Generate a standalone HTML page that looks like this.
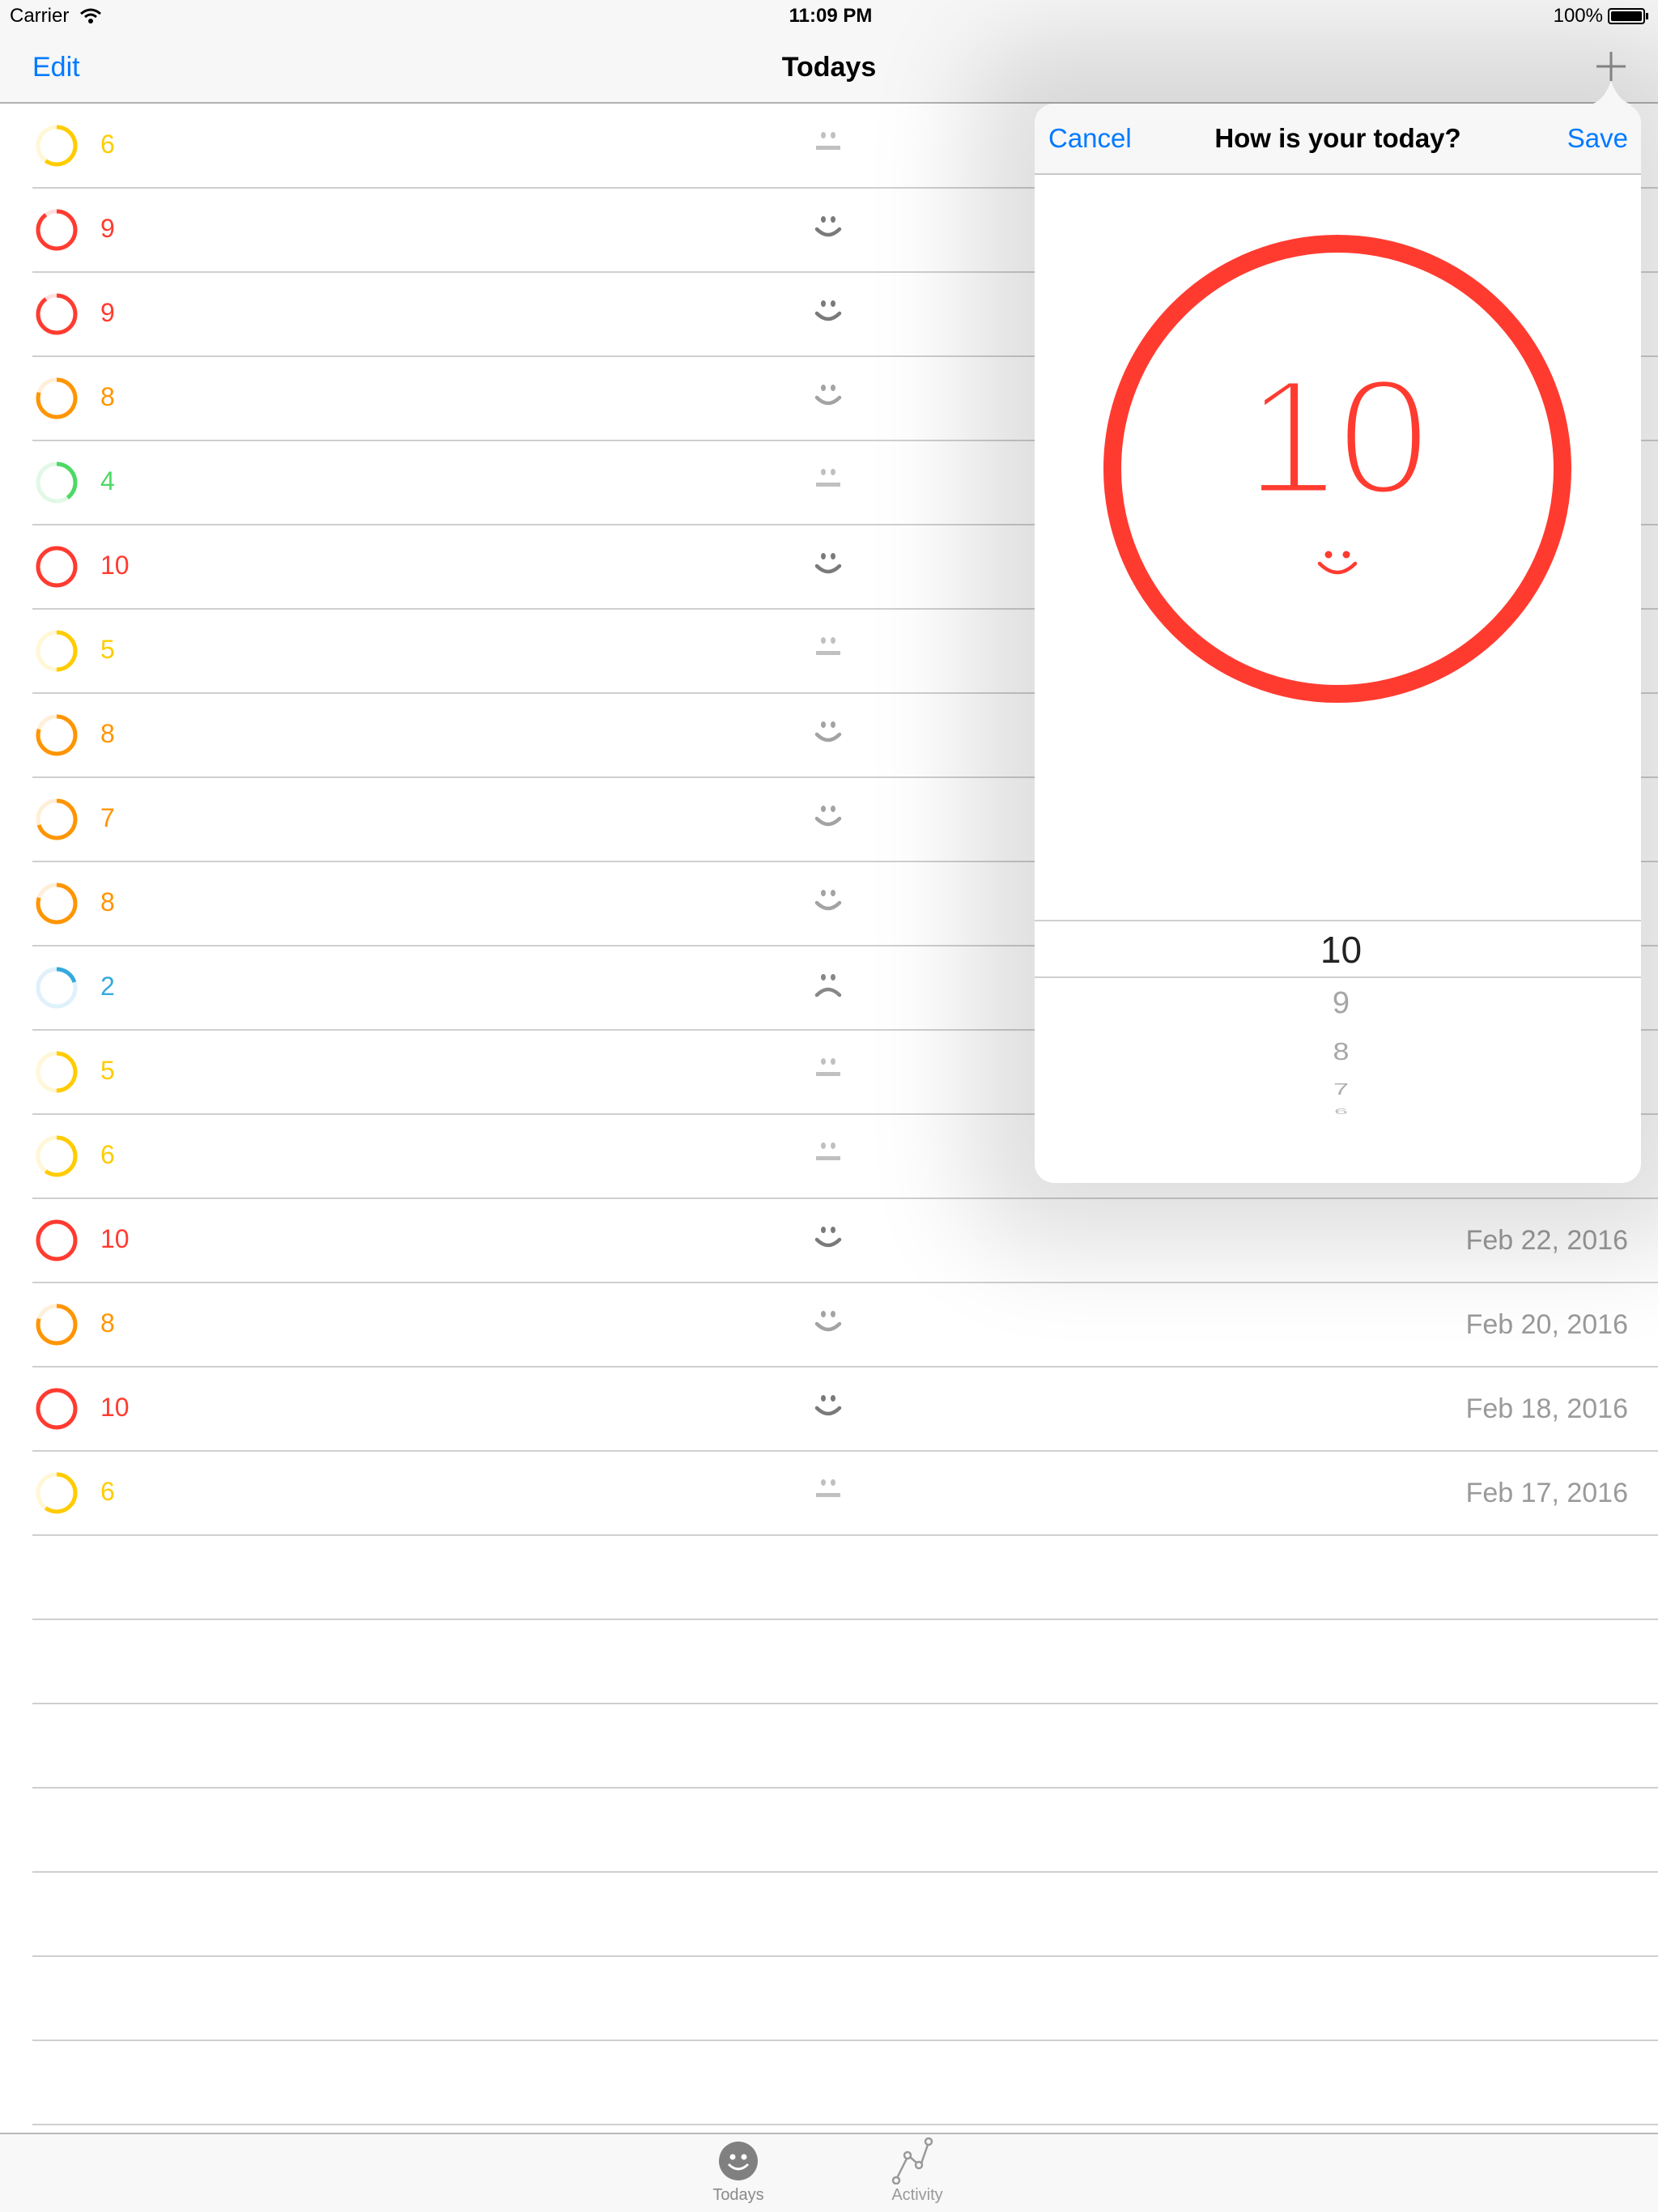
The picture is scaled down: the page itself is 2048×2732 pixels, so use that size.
<!DOCTYPE html>
<html><head><meta charset="utf-8"><style>
*{margin:0;padding:0;box-sizing:border-box}
body{width:2048px;height:2732px;position:relative;overflow:hidden;background:#fff;font-family:"Liberation Sans",sans-serif}
.abs{position:absolute}
.row{position:absolute;left:0;width:2048px;height:104px}
.sep{position:absolute;left:40px;right:0;top:103px;height:2px;background:#cfcfcf}
.num{position:absolute;left:124px;top:30px;font-size:32px;line-height:40px}
.ring{position:absolute;left:44px;top:26px}
.face{position:absolute;left:1004px;top:32px}
.date{position:absolute;right:37px;top:32px;font-size:34px;color:#9a9a9a;line-height:40px}
.r{color:#ff3b30}.o{color:#ff9500}.y{color:#ffcc00}.g{color:#4cd964}.b{color:#34aadc}
</style></head><body>

<svg width="0" height="0" style="position:absolute">
<defs>
<symbol id="sd" viewBox="0 0 38 36"><ellipse cx="13" cy="7" rx="3" ry="4" fill="#7a7a7a"/><ellipse cx="25" cy="7" rx="3" ry="4" fill="#7a7a7a"/><path d="M5 19 Q19 33 33 19" stroke="#7a7a7a" stroke-width="4.5" fill="none" stroke-linecap="round"/></symbol>
<symbol id="sl" viewBox="0 0 38 36"><ellipse cx="13" cy="7" rx="3" ry="4" fill="#a3a3a3"/><ellipse cx="25" cy="7" rx="3" ry="4" fill="#a3a3a3"/><path d="M5 19 Q19 33 33 19" stroke="#a3a3a3" stroke-width="4.5" fill="none" stroke-linecap="round"/></symbol>
<symbol id="nn" viewBox="0 0 38 36"><ellipse cx="13" cy="7" rx="3" ry="4" fill="#c0c0c0"/><ellipse cx="25" cy="7" rx="3" ry="4" fill="#c0c0c0"/><rect x="4" y="20" width="30" height="5" fill="#c0c0c0"/></symbol>
<symbol id="fr" viewBox="0 0 38 36"><ellipse cx="13" cy="7" rx="3" ry="4" fill="#888"/><ellipse cx="25" cy="7" rx="3" ry="4" fill="#888"/><path d="M5 29 Q19 15 33 29" stroke="#888" stroke-width="4.5" fill="none" stroke-linecap="round"/></symbol>
</defs></svg>

<!-- status + nav bar -->
<div class="abs" style="left:0;top:0;width:2048px;height:128px;background:#f7f7f7;border-bottom:2px solid #b2b2b2"></div>
<div class="abs" style="left:12px;top:6px;font-size:24px;color:#000">Carrier</div>
<svg class="abs" style="left:98px;top:8px" width="28" height="24" viewBox="0 0 28 24"><path d="M2 9 Q14 -1 26 9" stroke="#000" stroke-width="3" fill="none"/><path d="M7 13 Q14 7 21 13" stroke="#000" stroke-width="3" fill="none"/><circle cx="14" cy="18" r="3" fill="#000"/></svg>
<div class="abs" style="left:0;width:2052px;text-align:center;top:6px;font-size:24px;font-weight:bold;color:#000">11:09 PM</div>
<div class="abs" style="right:68px;top:6px;font-size:24px;color:#000">100%</div>
<div class="abs" style="left:1986px;top:10px;width:46px;height:20px;border:2px solid #000;border-radius:4px;padding:2px"><div style="width:100%;height:100%;background:#000;border-radius:2px"></div></div>
<div class="abs" style="left:2033px;top:16px;width:3px;height:8px;background:#000"></div>
<div class="abs" style="left:40px;top:64px;font-size:34px;color:#007aff">Edit</div>
<div class="abs" style="left:0;width:2048px;text-align:center;top:64px;font-size:34px;font-weight:bold;color:#000">Todays</div>
<svg class="abs" style="left:1970px;top:62px" width="40" height="40"><path d="M20 2V38M2 20H38" stroke="#8e8e8e" stroke-width="3"/></svg>

<!-- rows -->
<div class="row" style="top:128px"><div class="sep"></div><svg class="ring" width="52" height="52"><circle cx="26" cy="26" r="23" fill="none" stroke="#fff7d6" stroke-width="5"/><circle cx="26" cy="26" r="23" fill="none" stroke="#ffcc00" stroke-width="5" stroke-dasharray="86.7 200" transform="rotate(-90 26 26)"/></svg><div class="num y">6</div><svg class="face" width="38" height="36"><use href="#nn"/></svg></div>
<div class="row" style="top:232px"><div class="sep"></div><svg class="ring" width="52" height="52"><circle cx="26" cy="26" r="23" fill="none" stroke="#ffe0de" stroke-width="5"/><circle cx="26" cy="26" r="23" fill="none" stroke="#ff3b30" stroke-width="5" stroke-dasharray="130.1 200" transform="rotate(-90 26 26)"/></svg><div class="num r">9</div><svg class="face" width="38" height="36"><use href="#sd"/></svg></div>
<div class="row" style="top:336px"><div class="sep"></div><svg class="ring" width="52" height="52"><circle cx="26" cy="26" r="23" fill="none" stroke="#ffe0de" stroke-width="5"/><circle cx="26" cy="26" r="23" fill="none" stroke="#ff3b30" stroke-width="5" stroke-dasharray="130.1 200" transform="rotate(-90 26 26)"/></svg><div class="num r">9</div><svg class="face" width="38" height="36"><use href="#sd"/></svg></div>
<div class="row" style="top:440px"><div class="sep"></div><svg class="ring" width="52" height="52"><circle cx="26" cy="26" r="23" fill="none" stroke="#ffefd9" stroke-width="5"/><circle cx="26" cy="26" r="23" fill="none" stroke="#ff9500" stroke-width="5" stroke-dasharray="115.6 200" transform="rotate(-90 26 26)"/></svg><div class="num o">8</div><svg class="face" width="38" height="36"><use href="#sl"/></svg></div>
<div class="row" style="top:544px"><div class="sep"></div><svg class="ring" width="52" height="52"><circle cx="26" cy="26" r="23" fill="none" stroke="#e2f8e6" stroke-width="5"/><circle cx="26" cy="26" r="23" fill="none" stroke="#4cd964" stroke-width="5" stroke-dasharray="57.8 200" transform="rotate(-90 26 26)"/></svg><div class="num g">4</div><svg class="face" width="38" height="36"><use href="#nn"/></svg></div>
<div class="row" style="top:648px"><div class="sep"></div><svg class="ring" width="52" height="52"><circle cx="26" cy="26" r="23" fill="none" stroke="#ff3b30" stroke-width="5"/></svg><div class="num r">10</div><svg class="face" width="38" height="36"><use href="#sd"/></svg></div>
<div class="row" style="top:752px"><div class="sep"></div><svg class="ring" width="52" height="52"><circle cx="26" cy="26" r="23" fill="none" stroke="#fff7d6" stroke-width="5"/><circle cx="26" cy="26" r="23" fill="none" stroke="#ffcc00" stroke-width="5" stroke-dasharray="72.3 200" transform="rotate(-90 26 26)"/></svg><div class="num y">5</div><svg class="face" width="38" height="36"><use href="#nn"/></svg></div>
<div class="row" style="top:856px"><div class="sep"></div><svg class="ring" width="52" height="52"><circle cx="26" cy="26" r="23" fill="none" stroke="#ffefd9" stroke-width="5"/><circle cx="26" cy="26" r="23" fill="none" stroke="#ff9500" stroke-width="5" stroke-dasharray="115.6 200" transform="rotate(-90 26 26)"/></svg><div class="num o">8</div><svg class="face" width="38" height="36"><use href="#sl"/></svg></div>
<div class="row" style="top:960px"><div class="sep"></div><svg class="ring" width="52" height="52"><circle cx="26" cy="26" r="23" fill="none" stroke="#ffefd9" stroke-width="5"/><circle cx="26" cy="26" r="23" fill="none" stroke="#ff9500" stroke-width="5" stroke-dasharray="101.2 200" transform="rotate(-90 26 26)"/></svg><div class="num o">7</div><svg class="face" width="38" height="36"><use href="#sl"/></svg></div>
<div class="row" style="top:1064px"><div class="sep"></div><svg class="ring" width="52" height="52"><circle cx="26" cy="26" r="23" fill="none" stroke="#ffefd9" stroke-width="5"/><circle cx="26" cy="26" r="23" fill="none" stroke="#ff9500" stroke-width="5" stroke-dasharray="115.6 200" transform="rotate(-90 26 26)"/></svg><div class="num o">8</div><svg class="face" width="38" height="36"><use href="#sl"/></svg></div>
<div class="row" style="top:1168px"><div class="sep"></div><svg class="ring" width="52" height="52"><circle cx="26" cy="26" r="23" fill="none" stroke="#dff1fa" stroke-width="5"/><circle cx="26" cy="26" r="23" fill="none" stroke="#34aadc" stroke-width="5" stroke-dasharray="28.9 200" transform="rotate(-90 26 26)"/></svg><div class="num b">2</div><svg class="face" width="38" height="36"><use href="#fr"/></svg></div>
<div class="row" style="top:1272px"><div class="sep"></div><svg class="ring" width="52" height="52"><circle cx="26" cy="26" r="23" fill="none" stroke="#fff7d6" stroke-width="5"/><circle cx="26" cy="26" r="23" fill="none" stroke="#ffcc00" stroke-width="5" stroke-dasharray="72.3 200" transform="rotate(-90 26 26)"/></svg><div class="num y">5</div><svg class="face" width="38" height="36"><use href="#nn"/></svg></div>
<div class="row" style="top:1376px"><div class="sep"></div><svg class="ring" width="52" height="52"><circle cx="26" cy="26" r="23" fill="none" stroke="#fff7d6" stroke-width="5"/><circle cx="26" cy="26" r="23" fill="none" stroke="#ffcc00" stroke-width="5" stroke-dasharray="86.7 200" transform="rotate(-90 26 26)"/></svg><div class="num y">6</div><svg class="face" width="38" height="36"><use href="#nn"/></svg></div>
<div class="row" style="top:1480px"><div class="sep"></div><svg class="ring" width="52" height="52"><circle cx="26" cy="26" r="23" fill="none" stroke="#ff3b30" stroke-width="5"/></svg><div class="num r">10</div><svg class="face" width="38" height="36"><use href="#sd"/></svg><div class="date">Feb 22, 2016</div></div>
<div class="row" style="top:1584px"><div class="sep"></div><svg class="ring" width="52" height="52"><circle cx="26" cy="26" r="23" fill="none" stroke="#ffefd9" stroke-width="5"/><circle cx="26" cy="26" r="23" fill="none" stroke="#ff9500" stroke-width="5" stroke-dasharray="115.6 200" transform="rotate(-90 26 26)"/></svg><div class="num o">8</div><svg class="face" width="38" height="36"><use href="#sl"/></svg><div class="date">Feb 20, 2016</div></div>
<div class="row" style="top:1688px"><div class="sep"></div><svg class="ring" width="52" height="52"><circle cx="26" cy="26" r="23" fill="none" stroke="#ff3b30" stroke-width="5"/></svg><div class="num r">10</div><svg class="face" width="38" height="36"><use href="#sd"/></svg><div class="date">Feb 18, 2016</div></div>
<div class="row" style="top:1792px"><div class="sep"></div><svg class="ring" width="52" height="52"><circle cx="26" cy="26" r="23" fill="none" stroke="#fff7d6" stroke-width="5"/><circle cx="26" cy="26" r="23" fill="none" stroke="#ffcc00" stroke-width="5" stroke-dasharray="86.7 200" transform="rotate(-90 26 26)"/></svg><div class="num y">6</div><svg class="face" width="38" height="36"><use href="#nn"/></svg><div class="date">Feb 17, 2016</div></div>
<div class="row" style="top:1896px"><div class="sep"></div></div>
<div class="row" style="top:2000px"><div class="sep"></div></div>
<div class="row" style="top:2104px"><div class="sep"></div></div>
<div class="row" style="top:2208px"><div class="sep"></div></div>
<div class="row" style="top:2312px"><div class="sep"></div></div>
<div class="row" style="top:2416px"><div class="sep"></div></div>
<div class="row" style="top:2520px"><div class="sep"></div></div>

<!-- popover -->
<div class="abs" style="left:1278px;top:128px;width:749px;height:1333px;background:#fff;border-radius:24px;box-shadow:0 0 800px 80px rgba(0,0,0,0.13);z-index:5;overflow:hidden">
  <div style="position:absolute;left:0;top:0;width:100%;height:88px;background:#f7f7f7;border-bottom:2px solid #c8c8c8"></div>
  <div style="position:absolute;left:17px;top:24px;font-size:33px;color:#007aff">Cancel</div>
  <div style="position:absolute;left:0;width:749px;text-align:center;top:24px;font-size:33px;font-weight:bold;color:#000">How is your today?</div>
  <div style="position:absolute;right:16px;top:24px;font-size:33px;color:#007aff">Save</div>
  <svg style="position:absolute;left:0;top:0" width="749" height="1333">
    <circle cx="374" cy="451" r="278" fill="none" stroke="#ff3b30" stroke-width="22"/>
    <text x="374" y="482" text-anchor="middle" font-family="Liberation Sans" font-size="205" fill="#ff3b30" stroke="#fff" stroke-width="9">10</text>
    <circle cx="363" cy="557" r="4.5" fill="#ff3b30"/><circle cx="385" cy="557" r="4.5" fill="#ff3b30"/>
    <path d="M352 568 Q374 590 396 568" stroke="#ff3b30" stroke-width="4.5" fill="none" stroke-linecap="round"/>
  </svg>
  <div style="position:absolute;left:0;width:100%;top:1008px;height:2px;background:#d0d0d0"></div>
  <div style="position:absolute;left:0;width:100%;top:1078px;height:2px;background:#d0d0d0"></div>
  <div style="position:absolute;left:0;width:749px;text-align:center;top:1018px;font-size:46px;color:#222;padding-left:8px">10</div>
  <div style="position:absolute;left:0;width:749px;text-align:center;top:1090px;font-size:38px;color:#a5a5a5;padding-left:8px">9</div>
  <div style="position:absolute;left:0;width:749px;text-align:center;top:1150px;font-size:36px;color:#a8a8a8;padding-left:8px;transform:scaleY(.85)">8</div>
  <div style="position:absolute;left:0;width:749px;text-align:center;top:1198px;font-size:34px;color:#b0b0b0;padding-left:8px;transform:scaleY(.6)">7</div>
  <div style="position:absolute;left:0;width:749px;text-align:center;top:1228px;font-size:30px;color:#c0c0c0;padding-left:8px;transform:scaleY(.35)">6</div>
</div>
<svg class="abs" style="left:1960px;top:98px;z-index:6" width="60" height="32"><path d="M0 32 Q20 30 30 2 Q40 30 60 32Z" fill="#f7f7f7"/></svg>

<!-- tab bar -->
<div class="abs" style="left:0;top:2634px;width:2048px;height:98px;background:#f8f8f8;border-top:2px solid #b8b8b8"></div>
<svg class="abs" style="left:888px;top:2644px" width="48" height="50"><ellipse cx="24" cy="25" rx="24" ry="24" fill="#808080"/><circle cx="17" cy="20" r="3.5" fill="#fff"/><circle cx="31" cy="20" r="3.5" fill="#fff"/><path d="M12 29 Q24 41 36 29" stroke="#fff" stroke-width="3" fill="none"/></svg>
<div class="abs" style="left:862px;width:100px;text-align:center;top:2700px;font-size:20px;color:#8a8a8a">Todays</div>
<svg class="abs" style="left:1100px;top:2638px" width="66" height="60"><g stroke="#999" stroke-width="2.5" fill="none"><path d="M8 52L20 28M24 26L32 33M38 34L46 11"/><circle cx="7" cy="55" r="4"/><circle cx="21" cy="24" r="4"/><circle cx="35" cy="36" r="4"/><circle cx="47" cy="7" r="4"/></g></svg>
<div class="abs" style="left:1083px;width:100px;text-align:center;top:2700px;font-size:20px;color:#999">Activity</div>
</body></html>
